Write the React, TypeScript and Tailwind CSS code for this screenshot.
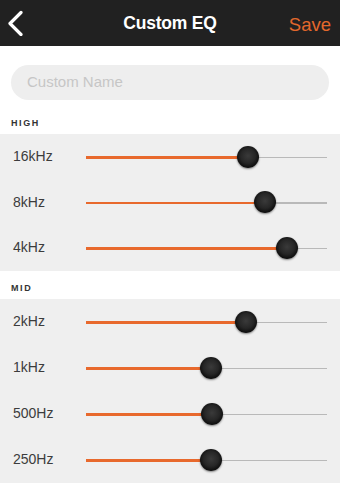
import React from "react";

type Band = { label: string; value: number };

const high: Band[] = [
  { label: "16kHz", value: 0.672 },
  { label: "8kHz", value: 0.743 },
  { label: "4kHz", value: 0.834 },
];
const mid: Band[] = [
  { label: "2kHz", value: 0.664 },
  { label: "1kHz", value: 0.519 },
  { label: "500Hz", value: 0.523 },
  { label: "250Hz", value: 0.519 },
];

function Row({ band, h }: { band: Band; h: string }) {
  return (
    <div className={`flex items-center ${h}`}>
      <div className="w-[86px] pl-[13px] text-[14px] text-[#3c3c3c]">{band.label}</div>
      <div className="relative flex-1 mr-[13px] h-[22px] flex items-center">
        <div className="absolute left-0 right-0 top-[11px] h-[1.5px] bg-[#b9b9b9]" />
        <div
          className="absolute left-0 top-[10.5px] h-[2.5px] bg-[#e8692d]"
          style={{ width: `${band.value * 100}%` }}
        />
        <div
          className="absolute top-[0px] w-[22px] h-[22px] -ml-[11px] rounded-full bg-[radial-gradient(circle_at_50%_45%,#3a3a3a_0%,#262626_45%,#0a0a0a_75%,#000_100%)] shadow-[0_1px_2px_rgba(0,0,0,0.45)]"
          style={{ left: `${band.value * 100}%` }}
        />
      </div>
    </div>
  );
}

export default function App() {
  return (
    <div className="w-[340px] h-[489px] bg-white overflow-hidden font-['Liberation_Sans',Arial,sans-serif]">
      <div className="relative h-[46px] bg-[#212121] flex items-center justify-center">
        <svg className="absolute left-[6px] top-[10px]" width="20" height="26" viewBox="0 0 20 26">
          <polyline
            points="15,2.5 4,13.5 15,24.5"
            fill="none"
            stroke="white"
            strokeWidth="3.2"
            strokeLinecap="round"
            strokeLinejoin="round"
          />
        </svg>
        <div className="text-white font-bold text-[17.5px] tracking-[-0.2px]">Custom EQ</div>
        <div className="absolute right-[9px] top-[11px] text-[#e3682c] text-[18.5px]">Save</div>
      </div>
      <div className="px-[11px] pt-[19px]">
        <div className="h-[35px] rounded-full bg-[#eeeeee] flex items-center pl-[16px] text-[15px] text-[#c6c6c6]">
          Custom Name
        </div>
      </div>
      <div className="h-[34px] flex items-end pb-[6px] pl-[11px] text-[9px] leading-[9px] font-bold tracking-[1.6px] text-[#333]">
        HIGH
      </div>
      <div className="bg-[#efefef] flex flex-col">
        {high.map((b) => (
          <Row key={b.label} band={b} h="h-[45.5px]" />
        ))}
      </div>
      <div className="h-[28px] flex items-end pb-[6px] pl-[11px] text-[9px] leading-[9px] font-bold tracking-[1.6px] text-[#333]">
        MID
      </div>
      <div className="bg-[#efefef] flex flex-col">
        {mid.map((b) => (
          <Row key={b.label} band={b} h="h-[46px]" />
        ))}
      </div>
    </div>
  );
}
